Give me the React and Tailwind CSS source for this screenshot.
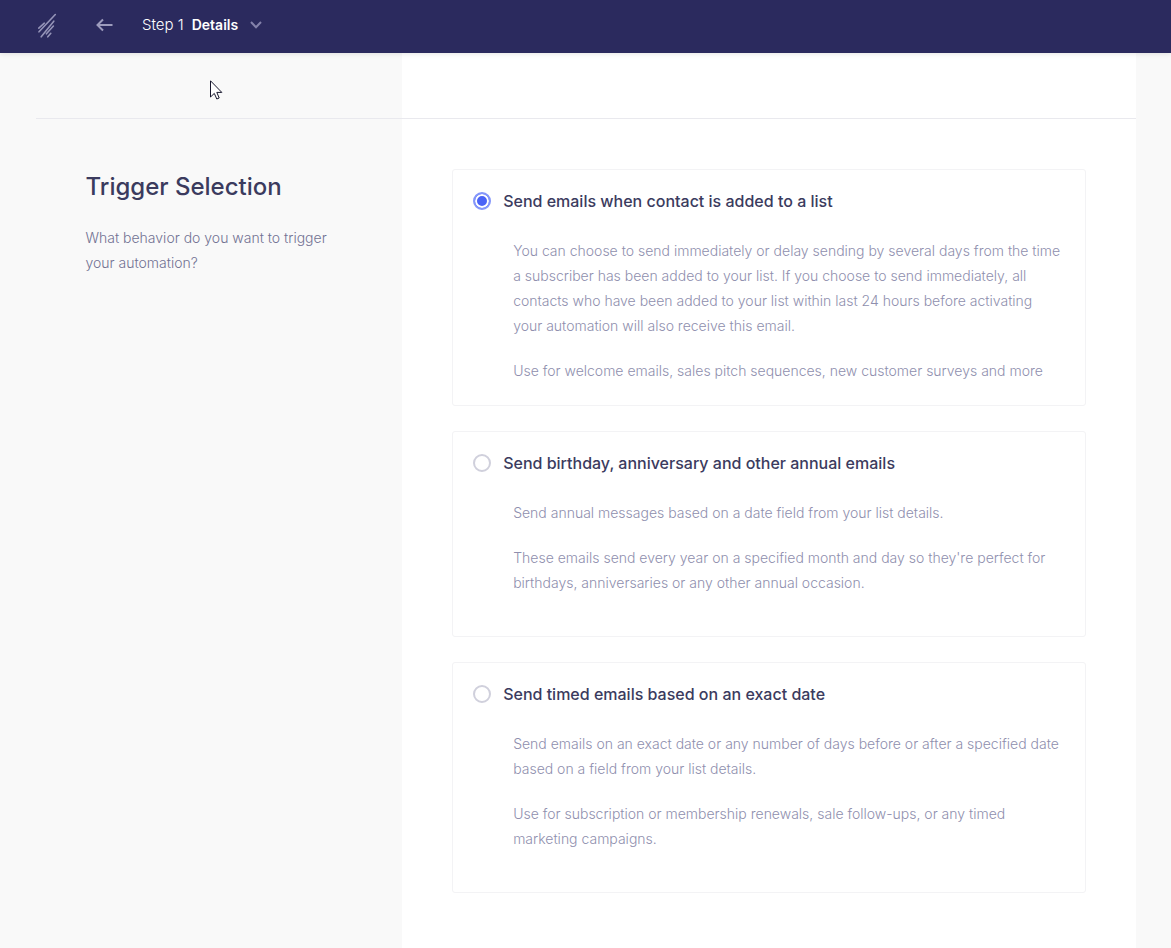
import React, { useState } from 'react';

const triggers = [
  {
    id: 'list',
    title: 'Send emails when contact is added to a list',
    text: [
      'You can choose to send immediately or delay sending by several days from the time a subscriber has been added to your list. If you choose to send immediately, all contacts who have been added to your list within last 24 hours before activating your automation will also receive this email.',
      'Use for welcome emails, sales pitch sequences, new customer surveys and more',
    ],
    padding: 'pb-[22px]',
  },
  {
    id: 'annual',
    title: 'Send birthday, anniversary and other annual emails',
    text: [
      'Send annual messages based on a date field from your list details.',
      "These emails send every year on a specified month and day so they're perfect for birthdays, anniversaries or any other annual occasion.",
    ],
    padding: 'pb-[41px]',
  },
  {
    id: 'date',
    title: 'Send timed emails based on an exact date',
    text: [
      'Send emails on an exact date or any number of days before or after a specified date based on a field from your list details.',
      'Use for subscription or membership renewals, sale follow-ups, or any timed marketing campaigns.',
    ],
    padding: 'pb-[41px]',
  },
];

const Logo = () => (
  <svg width="20" height="26" viewBox="0 0 20 26" fill="none" stroke="#9594b8" strokeWidth="1.6" strokeLinecap="round">
    <path d="M18.3 1.5 L2 18.8" />
    <path d="M7.3 10.2 L1.8 15.2" />
    <path d="M16.8 8.2 L4.2 23.8" />
    <path d="M16.4 13 L9.4 20.8" />
    <path d="M13.8 20.3 L10.8 23.8" />
  </svg>
);

const Header = () => (
  <header className="relative z-10 flex h-[53px] items-center bg-[#2b2a5e] pl-[37px] pb-[3px] shadow-[0_1px_5px_rgba(0,0,0,0.1)]">
    <a href="#home" aria-label="Home" className="mt-0.5">
      <Logo />
    </a>
    <button type="button" aria-label="Back" className="ml-[38px] p-px">
      <svg width="17" height="14" viewBox="0 0 17 14" fill="none" stroke="#9d9cbd" strokeWidth="2">
        <path d="M16.5 7 H2 M7 1.5 L1.5 7 L7 12.5" />
      </svg>
    </button>
    <button type="button" className="ml-7 flex items-center text-white">
      <span className="flex items-baseline gap-2">
        <span className="text-[15px] font-light">Step 1</span>
        <span className="text-sm font-semibold">Details</span>
      </span>
      <svg className="ml-3" width="12" height="8" viewBox="0 0 12 8" fill="none" stroke="#8482ab" strokeWidth="2">
        <path d="M1 1 L6 6.2 L11 1" />
      </svg>
    </button>
  </header>
);

const TriggerCard = ({ trigger, checked, onSelect }) => (
  <div className={`rounded-[3px] border border-[#f3f3f5] pt-5 pl-5 pr-5 ${trigger.padding}`}>
    <label htmlFor={trigger.id} className="flex items-center gap-3 text-base leading-[22px] font-medium text-[#3b3b5e]">
      <input
        id={trigger.id}
        type="radio"
        name="trigger"
        checked={checked}
        onChange={onSelect}
        className="size-[18px] appearance-none rounded-full border-2 border-[#d0d0dc] bg-white checked:border-[#8496fa] checked:bg-[#4a63f6] checked:shadow-[inset_0_0_0_2px_white]"
      />
      {trigger.title}
    </label>
    <div className="mt-[26px] ml-10 space-y-5 text-sm leading-[25px] font-light text-[#8f8fae]">
      {trigger.text.map((line) => (
        <p key={line}>{line}</p>
      ))}
    </div>
  </div>
);

const App = () => {
  const [selected, setSelected] = useState('list');

  return (
    <div className="flex min-h-screen flex-col bg-[#f9f9f9] font-['Inter',sans-serif]">
      <Header />
      <main className="mx-auto flex w-full max-w-[1100px] grow flex-col">
        <div className="grid h-[66px] grid-cols-3 border-b border-[#e9e9ee]">
          <div className="col-span-2 col-start-2 bg-white" />
        </div>
        <div className="grid grow grid-cols-3">
          <section className="px-[50px] pt-[50px]">
            <h1 className="text-2xl leading-9 font-medium text-[#3b3b5e]">Trigger Selection</h1>
            <p className="mt-5 text-sm leading-[25px] font-light text-[#727293]">
              What behavior do you want to trigger your automation?
            </p>
          </section>
          <section className="col-span-2 space-y-[25px] bg-white px-[50px] py-[50px]">
            {triggers.map((trigger) => (
              <TriggerCard
                key={trigger.id}
                trigger={trigger}
                checked={selected === trigger.id}
                onSelect={() => setSelected(trigger.id)}
              />
            ))}
          </section>
        </div>
      </main>
      {/* mouse pointer */}
      <svg className="pointer-events-none absolute top-20 left-[210px]" width="13" height="20" viewBox="0 0 13 20" fill="white" stroke="#16162c" strokeWidth="1">
        <path d="M0.5 0.8 V17 L4.3 13.4 L6.8 19 L9.2 18 L6.8 12.4 H11.8 Z" />
      </svg>
    </div>
  );
};

export default App;
